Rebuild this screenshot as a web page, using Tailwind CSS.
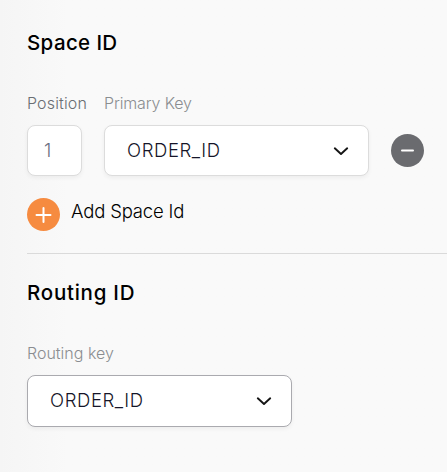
<!DOCTYPE html>
<html lang="en">
<head>
<meta charset="utf-8">
<title>Space ID</title>
<script src="https://cdn.jsdelivr.net/npm/@tailwindcss/browser@4"></script>
</head>
<body class="h-[472px] overflow-hidden bg-[#f9f9f9] bg-linear-to-r from-[#f5f5f5] to-[#f9f9f9] to-15% font-['Inter',sans-serif] text-black">
<main class="pl-[27px] pt-[29px]">
  <section class="h-[225px] border-b border-[#dadada]">
    <h2 class="h-7 text-[20.5px] leading-7 font-medium"><span class="tracking-[0.38px]">Space ID</span></h2>
    <div class="mt-9 flex h-5 gap-[22px] text-[16px] leading-5 font-light">
      <label class="w-[55px] whitespace-nowrap text-[#6a6e73]"><span class="tracking-[0.15px]">Position</span></label>
      <label class="whitespace-nowrap text-[#8a8d90]"><span class="tracking-[-0.15px]">Primary Key</span></label>
    </div>
    <div class="mt-3 flex h-[51px] items-center">
      <div class="flex h-[51px] w-[55px] items-center rounded-lg border border-[#dcdcdc] bg-white pl-4 text-[18.5px] font-light text-[#6a6e80] shadow-[0_2px_4px_rgba(0,0,0,0.05)]">1</div>
      <div class="ml-[22px] flex h-[51px] w-[265px] items-center justify-between rounded-lg border border-[#dcdcdc] bg-white pr-[19px] pl-[22px] shadow-[0_2px_4px_rgba(0,0,0,0.05)]">
        <span class="text-[18.5px] font-light tracking-[0.6px] text-[#151528]">ORDER_ID</span>
        <svg class="size-4" viewBox="0 0 16 16" fill="none" stroke="#151515" stroke-width="1.9" stroke-linecap="round" stroke-linejoin="round"><path d="M1.8 5.3 8 11 14.2 5.3"/></svg>
      </div>
      <svg class="ml-[22px] size-[33px]" viewBox="0 0 33 33"><circle cx="16.5" cy="16.5" r="16.5" fill="#6a6b6f"/><path d="M11 16.5h11" stroke="#fff" stroke-width="2" stroke-linecap="round"/></svg>
    </div>
    <div class="mt-[22px] flex gap-[11px]">
      <svg class="size-[33px]" viewBox="0 0 33 33"><circle cx="16.5" cy="16.5" r="16.5" fill="#f68b40"/><path d="M9.5 17h14M16.5 10v14" stroke="#fff" stroke-width="2" stroke-linecap="round"/></svg>
      <span class="text-[18.5px] leading-[26px] font-light tracking-[-0.17px]">Add Space Id</span>
    </div>
  </section>
  <section class="pt-[25px]">
    <h2 class="h-7 text-[20.5px] leading-7 font-medium"><span class="tracking-[0.75px]">Routing ID</span></h2>
    <label class="mt-9 block h-5 text-[16px] leading-5 font-light text-[#8a8d90]"><span class="tracking-[0px]">Routing key</span></label>
    <div class="mt-3 flex h-[52px] w-[265px] items-center justify-between rounded-lg border border-[#aaaaaf] bg-white pr-[19px] pl-[22px] shadow-[0_2px_4px_rgba(0,0,0,0.05)]">
      <span class="text-[18.5px] font-light tracking-[0.6px] text-[#151528]">ORDER_ID</span>
      <svg class="size-4" viewBox="0 0 16 16" fill="none" stroke="#151515" stroke-width="1.9" stroke-linecap="round" stroke-linejoin="round"><path d="M1.8 5.3 8 11 14.2 5.3"/></svg>
    </div>
  </section>
</main>
</body>
</html>
